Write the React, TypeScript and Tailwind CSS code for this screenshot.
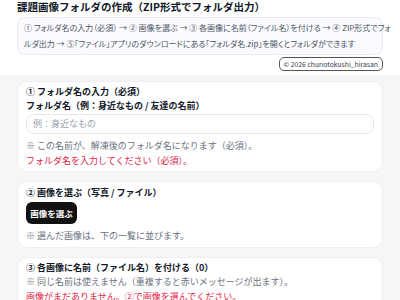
import React from "react";

export default function App() {
  const font = { fontFamily: '"Noto Sans CJK JP", "Noto Sans", sans-serif' };
  return (
    <div className="min-h-[300px] w-[400px] bg-[#f5f6f8]" style={font}>
      <div className="bg-white px-[17px] pt-0 pb-[4px]">
        <h1 className="text-[10.5px] font-bold leading-[14px] text-[#111827]">
          課題画像フォルダの作成（ZIP形式でフォルダ出力）
        </h1>
        <div className="mt-[3px] rounded-[8px] border border-[#e6e8f2] bg-[#fbfbff] px-[6px] py-[2px] text-[8px] leading-[16px] text-[#4b5563] [font-feature-settings:'palt']">
          <div className="whitespace-nowrap">① フォルダ名の入力（必須） → ② 画像を選ぶ → ③ 各画像に名前（ファイル名）を付ける → ④ ZIP形式でフォ</div>
          <div className="whitespace-nowrap">ルダ出力 → ⑤「ファイル」アプリのダウンロードにある「フォルダ名.zip」を開くとフォルダができます</div>
        </div>
        <div className="mt-[2px] flex justify-end">
          <span className="rounded-[5px] border border-[#555] px-[4px] text-[6.8px] leading-[12px] text-[#374151]">
            © 2026 chunotokushi_hirasan
          </span>
        </div>
      </div>
      <div className="flex flex-col gap-[9px] px-[17px] pt-[6px]">
        <div className="rounded-[10px] border border-[#eceef2] bg-white px-[8px] pt-[2px] pb-[3px]">
          <div className="text-[9px] font-bold leading-[16px] text-[#111827]">① フォルダ名の入力（必須）</div>
          <div className="text-[9px] font-bold leading-[12px] text-[#111827]">フォルダ名（例：身近なもの / 友達の名前）</div>
          <div className="mt-[2px] flex h-[20px] items-center rounded-[8px] border border-[#e5e7eb] px-[6px] text-[9px] text-[#9ca3af]">
            例：身近なもの
          </div>
          <div className="mt-[5px] text-[9px] leading-[14px] text-[#6b7280]">※ この名前が、解凍後のフォルダ名になります（必須）。</div>
          <div className="mt-[1px] text-[9px] leading-[14px] text-[#e11d48]">フォルダ名を入力してください（必須）。</div>
        </div>
        <div className="rounded-[10px] border border-[#eceef2] bg-white px-[8px] pt-[3px] pb-[4px]">
          <div className="text-[9px] font-bold leading-[16px] text-[#111827]">② 画像を選ぶ（写真 / ファイル）</div>
          <button className="mt-[1px] block h-[22px] w-[51px] rounded-[6px] bg-[#111111] text-center text-[8.5px] font-bold text-white">画像を選ぶ</button>
          <div className="mt-[5px] text-[9px] leading-[14px] text-[#6b7280]">※ 選んだ画像は、下の一覧に並びます。</div>
        </div>
        <div className="rounded-[10px] border border-[#eceef2] bg-white px-[8px] pt-[2px] pb-[6px]">
          <div className="text-[9px] font-bold leading-[16px] text-[#111827]">③ 各画像に名前（ファイル名）を付ける（0）</div>
          <div className="text-[9px] leading-[12px] text-[#6b7280]">※ 同じ名前は使えません（重複すると赤いメッセージが出ます）。</div>
          <div className="mt-[2px] text-[9px] leading-[14px] text-[#e11d48]">画像がまだありません。②で画像を選んでください。</div>
        </div>
      </div>
    </div>
  );
}
